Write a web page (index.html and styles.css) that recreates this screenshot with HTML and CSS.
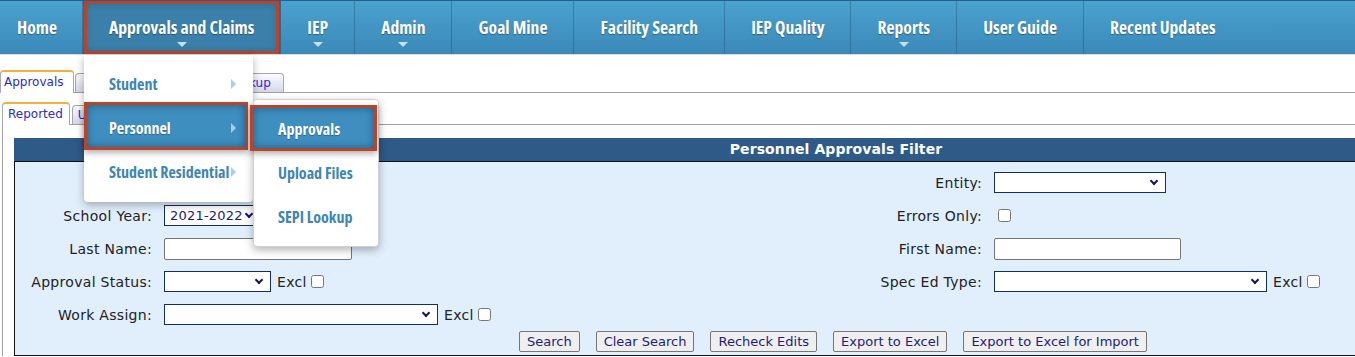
FILE: index.html
```html
<!DOCTYPE html>
<html lang="en">
<head>
  <meta charset="UTF-8">
  <title>Personnel Approvals</title>
  <link rel="stylesheet" href="styles.css">
</head>
<body>
  <!-- Hauptmenue -->
  <nav class="topnav">
    <ul class="menu">
      <li class="menu-item first"><a href="#">Home</a></li>
      <li class="menu-item open marked"><a href="#">Approvals and Claims</a><span class="caret"></span>
        <ul class="dropdown">
          <li class="drop-item"><a href="#">Student</a><span class="arrow"></span></li>
          <li class="drop-item current"><a href="#">Personnel</a><span class="arrow"></span>
            <ul class="submenu">
              <li class="drop-item current sub"><a href="#">Approvals</a></li>
              <li class="drop-item"><a href="#">Upload Files</a></li>
              <li class="drop-item"><a href="#">SEPI Lookup</a></li>
            </ul>
          </li>
          <li class="drop-item"><a href="#">Student Residential</a><span class="arrow"></span></li>
        </ul>
      </li>
      <li class="menu-item"><a href="#">IEP</a><span class="caret"></span></li>
      <li class="menu-item"><a href="#">Admin</a><span class="caret"></span></li>
      <li class="menu-item"><a href="#">Goal Mine</a></li>
      <li class="menu-item"><a href="#">Facility Search</a></li>
      <li class="menu-item"><a href="#">IEP Quality</a></li>
      <li class="menu-item"><a href="#">Reports</a><span class="caret"></span></li>
      <li class="menu-item"><a href="#">User Guide</a></li>
      <li class="menu-item last"><a href="#">Recent Updates</a></li>
    </ul>
  </nav>

  <!-- Reiter -->
  <div class="tabs outer">
    <ul class="tab-strip">
      <li class="tab active first-tab">Approvals</li>
      <li class="tab">Upload History</li>
      <li class="tab">SEPI Lookup</li>
    </ul>
    <div class="tab-panel">
      <div class="tabs inner">
        <ul class="tab-strip">
          <li class="tab active">Reported</li>
          <li class="tab">Unreported</li>
        </ul>
        <div class="tab-panel">

          <section class="filter">
            <h3 class="filter-title">Personnel Approvals Filter</h3>
            <div class="filter-body">
              <div class="filter-grid">
                <span class="lbl"></span>
                <span class="field"></span>
                <span class="lbl">Entity:</span>
                <span class="field"><span class="select w-171"><select><option></option></select></span></span>

                <span class="lbl">School Year:</span>
                <span class="field"><span class="select w-96"><select><option>2021-2022</option></select></span></span>
                <span class="lbl">Errors Only:</span>
                <span class="field"><input type="checkbox"></span>

                <span class="lbl">Last Name:</span>
                <span class="field"><input type="text" class="text w-188"></span>
                <span class="lbl">First Name:</span>
                <span class="field"><input type="text" class="text w-187"></span>

                <span class="lbl">Approval Status:</span>
                <span class="field"><span class="select w-107"><select><option></option></select></span><span class="excl">Excl</span><input type="checkbox"></span>
                <span class="lbl">Spec Ed Type:</span>
                <span class="field"><span class="select w-273"><select><option></option></select></span><span class="excl">Excl</span><input type="checkbox"></span>

                <span class="lbl">Work Assign:</span>
                <span class="field"><span class="select w-274"><select><option></option></select></span><span class="excl">Excl</span><input type="checkbox"></span>
                <span class="lbl"></span>
                <span class="field"></span>
              </div>

              <div class="filter-actions">
                <button>Search</button>
                <button>Clear Search</button>
                <button>Recheck Edits</button>
                <button>Export to Excel</button>
                <button>Export to Excel for Import</button>
              </div>
            </div>
          </section>

        </div>
      </div>
    </div>
  </div>
</body>
</html>
```

FILE: styles.css
```css
html, body {
  overflow: hidden;
}
body {
  margin: 0;
  font-family: "DejaVu Sans", Verdana, sans-serif;
  font-size: 14px;
  letter-spacing: 0.3px;
  color: #222;
  background: #fff;
}
ul {
  list-style: none;
  margin: 0;
  padding: 0;
}
a {
  text-decoration: none;
}

/* ---------- Hauptmenue ---------- */
.topnav {
  border-top: 1px solid #2a5d8c;
  border-bottom: 1px solid #dcdcdc;
  background: linear-gradient(#4aa2cf, #3b89b8);
  height: 53px;
  font-family: "Open Sans", "DejaVu Sans", sans-serif;
  font-stretch: 75%;
  letter-spacing: 0;
}
.menu {
  display: flex;
  height: 53px;
}
.menu-item {
  position: relative;
  border-right: 1px solid rgba(20, 70, 110, 0.35);
}
.menu-item.last {
  border-right: none;
}
.menu-item > a {
  display: block;
  padding: 0 26px;
  line-height: 53px;
  font-size: 17.6px;
  font-weight: bold;
  color: #fff;
  white-space: nowrap;
  text-shadow: 0 1px 1px rgba(0, 0, 0, 0.35);
}
.menu-item.first > a {
  padding-left: 17px;
  padding-right: 25px;
}
.caret {
  position: absolute;
  left: 50%;
  bottom: 7px;
  margin-left: -5px;
  border-left: 5px solid transparent;
  border-right: 5px solid transparent;
  border-top: 5px solid #c6dff0;
}
.menu-item.open {
  background: #3a80aa;
  box-shadow: inset 0 0 8px rgba(10, 50, 80, 0.6);
}
/* rote Markierung */
.menu-item.marked::after {
  content: "";
  position: absolute;
  top: 0;
  bottom: 0;
  left: 1px;
  right: 1px;
  border: 3px solid #b8442c;
}

/* Dropdown */
.dropdown {
  position: absolute;
  top: 54px;
  left: 1px;
  width: 169px;
  padding: 8px 0 7px;
  background: #fff;
  border-radius: 0 0 4px 4px;
  box-shadow: 0 3px 8px rgba(0, 0, 0, 0.3);
  z-index: 10;
}
.drop-item {
  position: relative;
  height: 44px;
}
.drop-item > a {
  position: relative;
  z-index: 2;
  display: block;
  padding-left: 25px;
  line-height: 42px;
  font-size: 16px;
  font-weight: bold;
  color: #3d85b4;
  white-space: nowrap;
}
.arrow {
  position: absolute;
  z-index: 2;
  right: 17px;
  top: 16px;
  border-top: 5px solid transparent;
  border-bottom: 5px solid transparent;
  border-left: 5px solid #a8d0ea;
}
.drop-item.current > a {
  color: #fff;
  text-shadow: 0 1px 1px rgba(0, 0, 0, 0.3);
}
.drop-item.current::before {
  content: "";
  position: absolute;
  z-index: 1;
  top: -5px;
  bottom: 1px;
  left: 0;
  right: 5px;
  background: #3e8fc0;
  border: 3px solid #b8442c;
  box-shadow: inset 0 0 8px rgba(10, 50, 80, 0.55), 0 3px 6px rgba(0, 0, 0, 0.3);
}
.submenu {
  position: absolute;
  top: -8px;
  left: 100%;
  width: 124px;
  padding: 8px 0 6px;
  background: #fff;
  border: 1px solid #d0d0d0;
  border-radius: 4px;
  box-shadow: 0 3px 8px rgba(0, 0, 0, 0.3);
}
.submenu .drop-item > a {
  padding-left: 24px;
}
.drop-item.current.sub::before {
  top: -3px;
  left: -4px;
  right: 1px;
}

/* ---------- Reiter ---------- */
.tabs.outer {
  margin-top: 16px;
}
.tabs.inner {
  margin-left: 2px;
}
.tab-strip {
  display: flex;
  align-items: flex-end;
  gap: 2px;
  height: 21px;
  font-size: 12px;
  letter-spacing: 0;
}
.tab {
  height: 18px;
  line-height: 18px;
  padding: 0 12px 0 9px;
  color: #2a2ad0;
  border: 1px solid #a4a4b4;
  border-bottom: none;
  border-radius: 4px 4px 0 0;
  background: linear-gradient(#fbfbff, #d6d6ea);
  white-space: nowrap;
}
.inner .tab {
  padding-left: 5px;
}
.tab.active {
  position: relative;
  height: 21px;
  line-height: 21px;
  margin-bottom: -1px;
  padding: 0 6px 0 5px;
  background: #fff;
  border-color: #aaa;
  border-top: 2px solid #f2b13c;
}
.tab.active.first-tab {
  margin-right: -1px;
  padding: 0 9px 0 3px;
}
.tab-panel {
  border-top: 1px solid #a0a0a0;
  padding-top: 10px;
}
.inner > .tab-panel {
  border-left: 1px solid #a0a0a0;
  padding: 13px 0 0 11px;
}

/* ---------- Filter ---------- */
.filter {
  width: 1644px;
}
.filter-title {
  margin: 0;
  height: 23px;
  line-height: 23px;
  background: #2e5a87;
  color: #fff;
  font-size: 14px;
  letter-spacing: 0.1px;
  font-weight: bold;
  text-align: center;
}
.filter-body {
  background: #e1effd;
  border: 1px solid #111;
  padding: 4px 0 3px;
}
.filter-grid {
  display: grid;
  grid-template-columns: 137px 600px 206px 1fr;
  grid-auto-rows: 33px;
  column-gap: 12px;
  align-items: center;
}
.lbl {
  text-align: right;
  white-space: nowrap;
}
.field {
  display: flex;
  align-items: center;
}
.select {
  position: relative;
  display: inline-block;
}
.select select {
  appearance: none;
  -webkit-appearance: none;
  display: block;
  width: 100%;
  height: 21px;
  margin: 0;
  padding: 0 5px;
  border: 1px solid #12305f;
  border-radius: 0;
  background: #fff;
  font-family: "DejaVu Sans", Verdana, sans-serif;
  font-size: 13px;
  letter-spacing: 0.2px;
  color: #1c1c70;
}
.select::after {
  content: "";
  position: absolute;
  right: 9px;
  top: 6px;
  width: 4px;
  height: 4px;
  border-right: 2px solid #151560;
  border-bottom: 2px solid #151560;
  transform: rotate(45deg);
}
.w-96 { width: 97px; }
.w-107 { width: 107px; }
.w-171 { width: 172px; }
.w-273 { width: 273px; }
.w-274 { width: 274px; }
.text {
  box-sizing: border-box;
  height: 22px;
  margin: 0;
  border: 1px solid #767676;
  border-radius: 2px;
  background: #fff;
}
.w-188 { width: 188px; }
.w-187 { width: 187px; }
.excl {
  margin-left: 6px;
}
input[type="checkbox"] {
  margin: 3px 3px 3px 4px;
}
.filter-actions {
  display: flex;
  gap: 16px;
  padding-left: 504px;
}
.filter-actions button {
  height: 21px;
  padding: 0 7px;
  border: 1px solid #767676;
  border-radius: 2px;
  background: #efefef;
  font-family: "DejaVu Sans", Verdana, sans-serif;
  font-size: 13px;
  letter-spacing: 0;
  color: #1d1d7a;
}
```
